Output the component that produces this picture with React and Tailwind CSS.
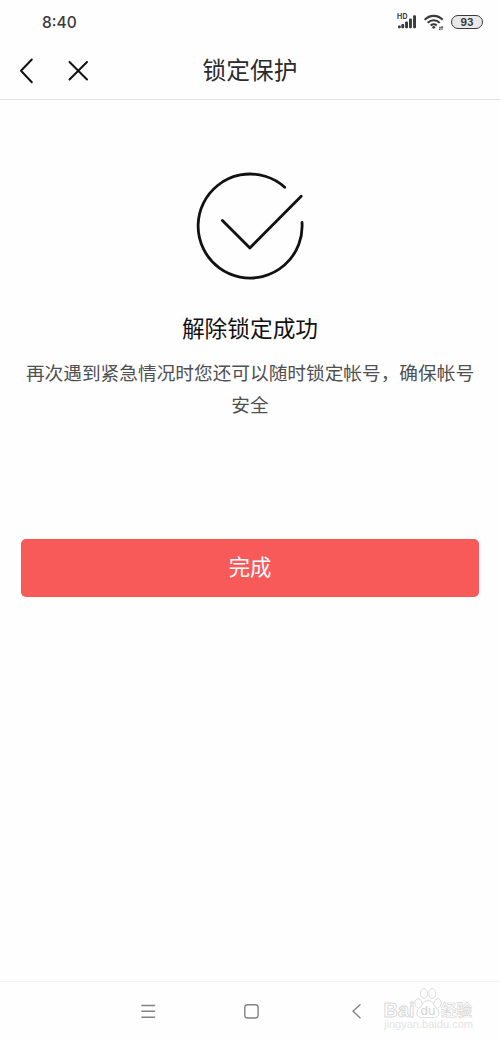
function StatusBar() {
  return (
    <div className="flex h-11 items-center justify-between pr-[17px] pl-[42px] text-[#3a3a3a]">
      <span className="pt-[2px] font-[Inter,sans-serif] text-[15.5px] leading-none font-medium">8:40</span>
      <div className="flex items-center">
        <svg width="22" height="18" viewBox="0 0 22 18" className="mr-[5px]" fill="currentColor">
          <text x="0" y="6.3" fontSize="7" fontWeight="700" fontFamily="Inter, sans-serif" textLength="10.5">HD</text>
          <rect x="1" y="12.6" width="2.8" height="2.6" rx="1" />
          <rect x="4.3" y="11" width="2.9" height="4.2" rx="1" />
          <rect x="8.1" y="8.5" width="2.9" height="6.7" rx="1" />
          <rect x="12" y="5.5" width="2.9" height="9.7" rx="1" />
          <rect x="16.1" y="2.3" width="2.9" height="12.9" rx="1" />
        </svg>
        <svg width="21" height="18" viewBox="0 0 21 18" className="mr-[6px]" fill="none" stroke="currentColor" strokeWidth="2.1">
          <path d="M.7 6.8a12.2 12.2 0 0 1 18 0M3.7 9.9a8.2 8.2 0 0 1 12 0M6.7 12.6a4.4 4.4 0 0 1 6 0" />
          <circle cx="9.7" cy="14.3" r="1.4" fill="currentColor" stroke="none" />
          <path d="M15 14.3h4l-1.2-1.2M19 16h-4l1.2 1.2" strokeWidth="0.9" />
        </svg>
        <div className="flex h-[14px] w-8 items-center justify-center rounded-full border-[1.5px] border-[#3a3a3a] bg-[#e9e9e9] font-[Inter,sans-serif] text-[10px] leading-none font-bold">
          93
        </div>
      </div>
    </div>
  );
}

function Header() {
  return (
    <header className="grid h-14 grid-cols-[1fr_auto_1fr] items-center border-b border-[#e2e2e2]">
      <div className="flex items-center gap-[30px] pb-[2px] pl-[19px]">
        <svg width="18" height="28" viewBox="0 0 18 28" fill="none" stroke="#111" strokeWidth="2" strokeLinecap="round" strokeLinejoin="round">
          <path d="M12.8 2.5 2 13.8 12.8 25.2" />
        </svg>
        <svg width="24" height="24" viewBox="0 0 24 24" fill="none" stroke="#111" strokeWidth="2" strokeLinecap="round">
          <path d="M2.5 3 20 20.5M20 3 2.5 20.5" />
        </svg>
      </div>
      <h1 className="pb-[4px] text-[23.7px] leading-none text-[#2b2b2b]">锁定保护</h1>
    </header>
  );
}

function Watermark() {
  return (
    <svg width="96" height="48" viewBox="0 0 96 48" className="absolute top-1 left-[381px]" fill="#fff" stroke="#d8d8d8" strokeWidth="0.9">
      <ellipse cx="37.5" cy="17.5" rx="3.6" ry="4.8" transform="rotate(-15 37.5 17.5)" />
      <ellipse cx="43" cy="7.5" rx="3.5" ry="5" />
      <ellipse cx="51.3" cy="7.5" rx="3.5" ry="5" />
      <ellipse cx="56.5" cy="17.5" rx="3.6" ry="4.8" transform="rotate(15 56.5 17.5)" />
      <path d="M47 14.5c-5 0-5.500 5-8.500 7.500-4.500 3.500-3 9.500 2 9.500h13c5 0 6-6 2-9.500-3-2.500-3.500-7.500-8.500-7.500Z" />
      <g fontFamily="'Liberation Sans', sans-serif" fontWeight="700">
        <text x="2.5" y="30.5" fontSize="20" textLength="31" lengthAdjust="spacingAndGlyphs">Bai</text>
        <text x="39.5" y="29" fontSize="13" fontWeight="400" textLength="15" lengthAdjust="spacingAndGlyphs" fill="#d4d4d4" stroke="none">du</text>
      </g>
      <text x="60" y="29.5" fontSize="15.5" fontWeight="700" fontFamily="'Noto Sans CJK SC', sans-serif" strokeWidth="0.7">经验</text>
      <text x="3" y="41.5" fontSize="10" fontFamily="'Liberation Sans', sans-serif" textLength="89" lengthAdjust="spacingAndGlyphs" fill="#e4e4e4" stroke="none">jingyan.baidu.com</text>
    </svg>
  );
}

function SystemNav() {
  return (
    <nav className="relative h-[61px] border-t border-[#f2f2f2]">
      <div className="flex pt-[20px] pl-[140px]">
        <svg width="222" height="18" viewBox="0 0 222 18" fill="none" stroke="#828282" strokeWidth="1.4" strokeLinecap="round" strokeLinejoin="round">
          <path d="M1.8 3.5h12.8M1.8 9.3h12.8M1.8 15.2h12.8" />
          <rect x="104.8" y="2.7" width="13.3" height="13.3" rx="2.7" />
          <path d="M220 2.7l-7 6.5 7 6.5" />
        </svg>
      </div>
      <Watermark />
    </nav>
  );
}

export default function App() {
  return (
    <div className="flex h-[1042px] w-[500px] flex-col overflow-hidden bg-[#fefefe] font-['Noto_Sans_CJK_SC',sans-serif]">
      <StatusBar />
      <Header />
      <main className="flex flex-1 flex-col items-center pt-[70px]">
        <svg width="112" height="112" viewBox="193.6 169.6 112 112" fill="none" stroke="#111" strokeWidth="2.8" strokeLinecap="round" strokeLinejoin="round">
          <path d="M284.3 186.8A52 52 0 1 0 301.6 222" />
          <path d="M222 220l27.500 27.600 51.300-51.800" />
        </svg>
        <h2 className="mt-[31px] text-[22.7px] leading-[30px] text-[#111]">解除锁定成功</h2>
        <p className="mt-[13px] w-[452px] text-center text-[18.68px] leading-8 text-[#505050]">
          再次遇到紧急情况时您还可以随时锁定帐号，确保帐号安全
        </p>
        <button className="mt-[118.5px] h-[58.5px] w-[458px] rounded-[5px] bg-[#f85a5a] pb-[4px] text-[21.3px] text-white">
          完成
        </button>
      </main>
      <SystemNav />
    </div>
  );
}
